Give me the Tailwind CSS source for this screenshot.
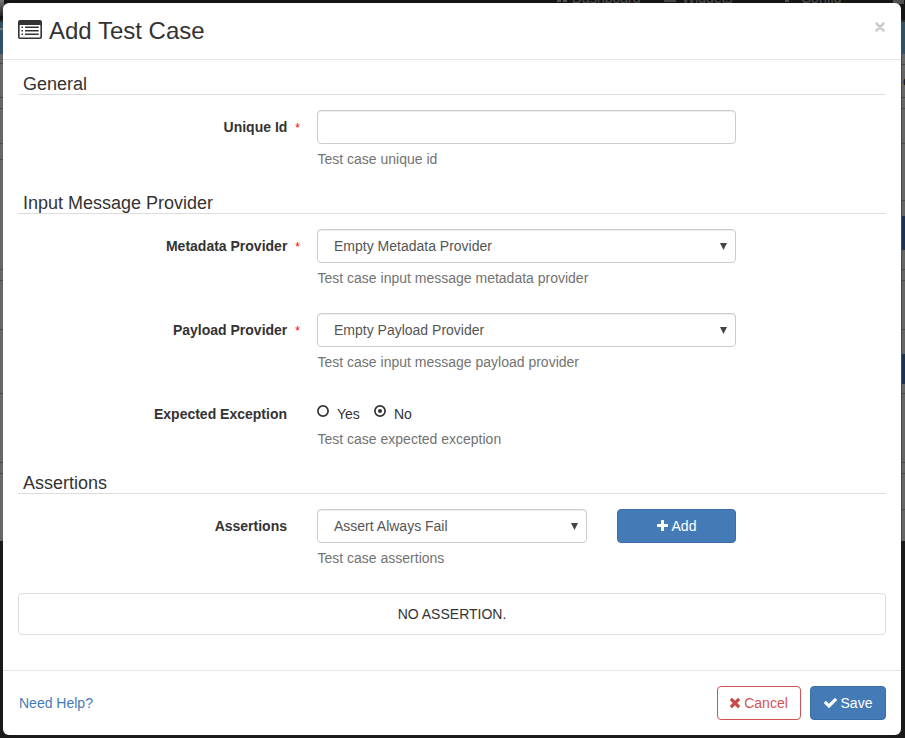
<!DOCTYPE html>
<html lang="en">
<head>
<meta charset="utf-8">
<title>Add Test Case</title>
<script src="https://cdn.jsdelivr.net/npm/@tailwindcss/browser@4"></script>
</head>
<body class="relative h-[738px] w-[905px] overflow-hidden bg-[#1a1a1a] font-['Liberation_Sans',Arial,sans-serif] text-sm leading-5 text-[#333]">
  <!-- dimmed page behind the dialog -->
  <div class="absolute inset-0 flex flex-col">
    <div class="relative h-[22px] shrink-0 overflow-hidden border-b-2 border-[#303030] bg-[#151515] text-[#505050]">
      <span class="absolute left-0 top-0 h-4 w-1 bg-gradient-to-b from-[#777] to-[#222]"></span>
      <span class="absolute left-[557px] top-0 flex gap-[2px]"><i class="h-[2px] w-1 bg-[#505050]"></i><i class="h-[2px] w-1 bg-[#505050]"></i></span>
      <span class="absolute left-[572px] -top-[12px]">Dashboard</span>
      <span class="absolute left-[664px] top-0 h-[2px] w-3 bg-[#444]"></span>
      <span class="absolute left-[682px] -top-[12px]">Widgets</span>
      <span class="absolute left-[785px] top-0 h-[2px] w-1 bg-[#505050]"></span>
      <span class="absolute left-[801px] -top-[12px]">Config</span>
      <span class="absolute left-[893px] top-0 h-[4px] w-[11px] bg-[#505050]"></span>
    </div>
    <div class="flex h-[32px] shrink-0 justify-between bg-[#305168]"><i class="mt-[6px] h-[2px] w-[3px] bg-[#777]"></i></div>
    <div class="flex h-[487px] shrink-0 justify-between bg-[#666]">
      <div class="flex w-[3px] flex-col">
        <i class="h-[10px] border-b border-[#444]"></i><i class="h-[34px] border-b border-[#444]"></i><i class="h-[11px] border-b border-[#4b4b4b]"></i><i class="h-[35px] border-b border-[#4b4b4b]"></i><i class="h-[16px] border-b border-[#4b4b4b]"></i><i class="h-[110px] border-b border-[#4b4b4b]"></i><i class="h-[11px] border-b border-[#4b4b4b]"></i><i class="h-[49px] border-b border-[#4b4b4b]"></i><i class="h-[64px] border-b border-[#4b4b4b]"></i><i class="h-[69px] border-b border-[#4b4b4b]"></i><i class="h-[11px] border-b border-[#4b4b4b]"></i>
      </div>
      <div class="relative flex w-[4px] flex-col overflow-hidden border-l border-[#494949]">
        <i class="h-[11px] border-b border-[#444]"></i><i class="h-[33px] border-b border-[#444]"></i><i class="h-[11px] border-b border-[#4b4b4b]"></i><i class="h-[35px] border-b border-[#4b4b4b]"></i><i class="h-[57px] border-b border-[#4b4b4b]"></i><i class="h-[15px]"></i>
        <i class="h-[34px] bg-[#1b3350]"></i>
        <i class="h-[20px] border-b border-[#4b4b4b]"></i><i class="h-[11px] border-b border-[#4b4b4b]"></i><i class="h-[49px] border-b border-[#4b4b4b]"></i><i class="h-[24px]"></i>
        <i class="h-[30px] bg-[#1b3350]"></i>
        <i class="h-[10px] border-b border-[#4b4b4b]"></i><i class="h-[69px] border-b border-[#4b4b4b]"></i><i class="h-[11px] border-b border-[#4b4b4b]"></i><i class="h-[36px] border-b border-[#4b4b4b]"></i>
        <span class="absolute left-[1px] top-[17px] text-[#111]">o</span>
      </div>
    </div>
  </div>

  <!-- dialog -->
  <div class="absolute left-[3px] top-[3px] flex h-[732px] w-[898px] flex-col rounded-[6px] bg-white">
    <header class="flex h-[57px] shrink-0 items-start border-b border-[#e5e5e5] px-[15px]">
      <svg class="mt-[17px] h-[19px] w-6" viewBox="0 0 24 19" fill="#333">
        <path fill-rule="evenodd" d="M2 0H22a2 2 0 0 1 2 2V17a2 2 0 0 1-2 2H2a2 2 0 0 1-2-2V2a2 2 0 0 1 2-2ZM2.2 5a.6.6 0 0 0-.6.6V16.8a.6.6 0 0 0 .6.6H21.8a.6.6 0 0 0 .6-.6V5.6a.6.6 0 0 0-.6-.6Z"/>
        <path d="M3.5 6.5h1.5v1.5h-1.5zM3.5 10h1.5v1.5h-1.5zM3.5 13.5h1.5v1.5h-1.5zM7 6.5h13.7v1.5H7zM7 10h13.7v1.5H7zM7 13.5h13.7v1.5H7z"/>
      </svg>
      <h4 class="ml-[7px] mt-[11px] text-[24px] leading-[34px]">Add Test Case</h4>
      <svg class="ml-auto mr-[1px] mt-[19px] h-[10px] w-[10px]" viewBox="0 0 10 10" fill="none" stroke="#ccc" stroke-width="2.5" stroke-linecap="round"><path d="M1.5 1.5l7 7M8.5 1.5l-7 7"/></svg>
    </header>

    <main class="flex h-[610px] shrink-0 flex-col px-[15px]">
      <h5 class="mt-[14px] h-[21px] border-b border-[#ddd] pl-[5px] text-[18px] leading-[20px]">General</h5>
      <div class="mt-[15px] flex h-[83px]">
        <label class="mr-[17px] w-[282px] pt-[7px] text-right font-bold">Unique Id<span class="ml-2 text-[12px] font-normal text-[#f00]">*</span></label>
        <div class="w-[419px]">
          <input class="block h-[34px] w-full rounded-[4px] border border-[#ccc] px-4 shadow-[inset_0_1px_1px_rgba(0,0,0,0.075)]">
          <p class="ml-[0.5px] mt-[5px] text-[#737373]">Test case unique id</p>
        </div>
      </div>

      <h5 class="h-[21px] border-b border-[#ddd] pl-[5px] text-[18px] leading-[20px]">Input Message Provider</h5>
      <div class="mt-[15px] flex h-[84px]">
        <label class="mr-[17px] w-[282px] pt-[7px] text-right font-bold">Metadata Provider<span class="ml-2 text-[12px] font-normal text-[#f00]">*</span></label>
        <div class="w-[419px]">
          <div class="flex h-[34px] items-center justify-between rounded-[4px] border border-[#ccc] pl-4 pr-[8px] text-[#555] shadow-[inset_0_1px_1px_rgba(0,0,0,0.075)]">Empty Metadata Provider<svg class="h-[7px] w-[7px]" viewBox="0 0 7 7" fill="#444"><path d="M0 0h7L3.5 7z"/></svg></div>
          <p class="ml-[0.5px] mt-[5px] text-[#737373]">Test case input message metadata provider</p>
        </div>
      </div>
      <div class="flex h-[84px]">
        <label class="mr-[17px] w-[282px] pt-[7px] text-right font-bold">Payload Provider<span class="ml-2 text-[12px] font-normal text-[#f00]">*</span></label>
        <div class="w-[419px]">
          <div class="flex h-[34px] items-center justify-between rounded-[4px] border border-[#ccc] pl-4 pr-[8px] text-[#555] shadow-[inset_0_1px_1px_rgba(0,0,0,0.075)]">Empty Payload Provider<svg class="h-[7px] w-[7px]" viewBox="0 0 7 7" fill="#444"><path d="M0 0h7L3.5 7z"/></svg></div>
          <p class="ml-[0.5px] mt-[5px] text-[#737373]">Test case input message payload provider</p>
        </div>
      </div>
      <div class="flex h-[76px]">
        <label class="mr-[30px] w-[269px] pt-[7px] text-right font-bold">Expected Exception</label>
        <div class="w-[419px] pt-[7px]">
          <div class="flex h-5">
            <svg class="mt-[1px] h-3 w-3" viewBox="0 0 12 12" fill="none" stroke="#333" stroke-width="1.7"><circle cx="6" cy="6" r="5.1"/></svg>
            <span class="ml-[8px] w-[37px]">Yes</span>
            <svg class="mt-[1px] h-3 w-3" viewBox="0 0 12 12" fill="none" stroke="#333" stroke-width="1.7"><circle cx="6" cy="6" r="5.1"/><circle cx="6" cy="6" r="2" fill="#333" stroke="none"/></svg>
            <span class="ml-[8px]">No</span>
          </div>
          <p class="ml-[0.5px] mt-[5px] text-[#737373]">Test case expected exception</p>
        </div>
      </div>

      <h5 class="h-[21px] border-b border-[#ddd] pl-[5px] text-[18px] leading-[20px]">Assertions</h5>
      <div class="mt-[15px] flex h-[84px]">
        <label class="mr-[30px] w-[269px] pt-[7px] text-right font-bold">Assertions</label>
        <div class="w-[270px]">
          <div class="flex h-[34px] items-center justify-between rounded-[4px] border border-[#ccc] pl-4 pr-[8px] text-[#555] shadow-[inset_0_1px_1px_rgba(0,0,0,0.075)]">Assert Always Fail<svg class="h-[7px] w-[7px]" viewBox="0 0 7 7" fill="#444"><path d="M0 0h7L3.5 7z"/></svg></div>
          <p class="ml-[0.5px] mt-[5px] text-[#737373]">Test case assertions</p>
        </div>
        <button class="ml-[30px] flex h-[34px] w-[119px] items-center justify-center gap-1 rounded-[4px] border border-[#3a6ea5] bg-[#447bb7] text-white"><svg class="mb-[2px] h-[11px] w-[11px]" viewBox="192 128 1408 1408" fill="currentColor"><path d="M1600 736v192q0 40-28 68t-68 28h-416v416q0 40-28 68t-68 28h-192q-40 0-68-28t-28-68v-416h-416q-40 0-68-28t-28-68v-192q0-40 28-68t68-28h416v-416q0-40 28-68t68-28h192q40 0 68 28t28 68v416h416q40 0 68 28t28 68z"/></svg>Add</button>
      </div>
      <div class="flex h-[42px] items-center justify-center rounded-[4px] border border-[#ddd]">NO ASSERTION.</div>
    </main>

    <footer class="flex h-[65px] items-start border-t border-[#e5e5e5] px-[15px] pt-[15px]">
      <a class="ml-[1px] mt-[7px] text-[#447bb7]">Need Help?</a>
      <button class="ml-auto flex h-[34px] w-[84px] items-center justify-center gap-1 rounded-[4px] border border-[#d05454] text-[#d05454]"><svg class="h-[10px] w-[10px]" viewBox="302 366 1188 1188" fill="#cb4848"><path d="M1490 1322q0 40-28 68l-136 136q-28 28-68 28t-68-28l-294-294-294 294q-28 28-68 28t-68-28l-136-136q-28-28-28-68t28-68l294-294-294-294q-28-28-28-68t28-68l136-136q28-28 68-28t68 28l294 294 294-294q28-28 68-28t68 28l136 136q28 28 28 68t-28 68l-294 294 294 294q28 28 28 68z"/></svg>Cancel</button>
      <button class="ml-[9px] flex h-[34px] w-[76px] items-center justify-center gap-1 rounded-[4px] border border-[#3a6ea5] bg-[#447bb7] text-white"><svg class="h-[10px] w-[13px]" viewBox="121 334 1550 1188" fill="currentColor"><path d="M1671 566q0 40-28 68l-724 724-136 136q-28 28-68 28t-68-28l-136-136-362-362q-28-28-28-68t28-68l136-136q28-28 68-28t68 28l294 295 656-657q28-28 68-28t68 28l136 136q28 28 28 68z"/></svg>Save</button>
    </footer>
  </div>
</body>
</html>
